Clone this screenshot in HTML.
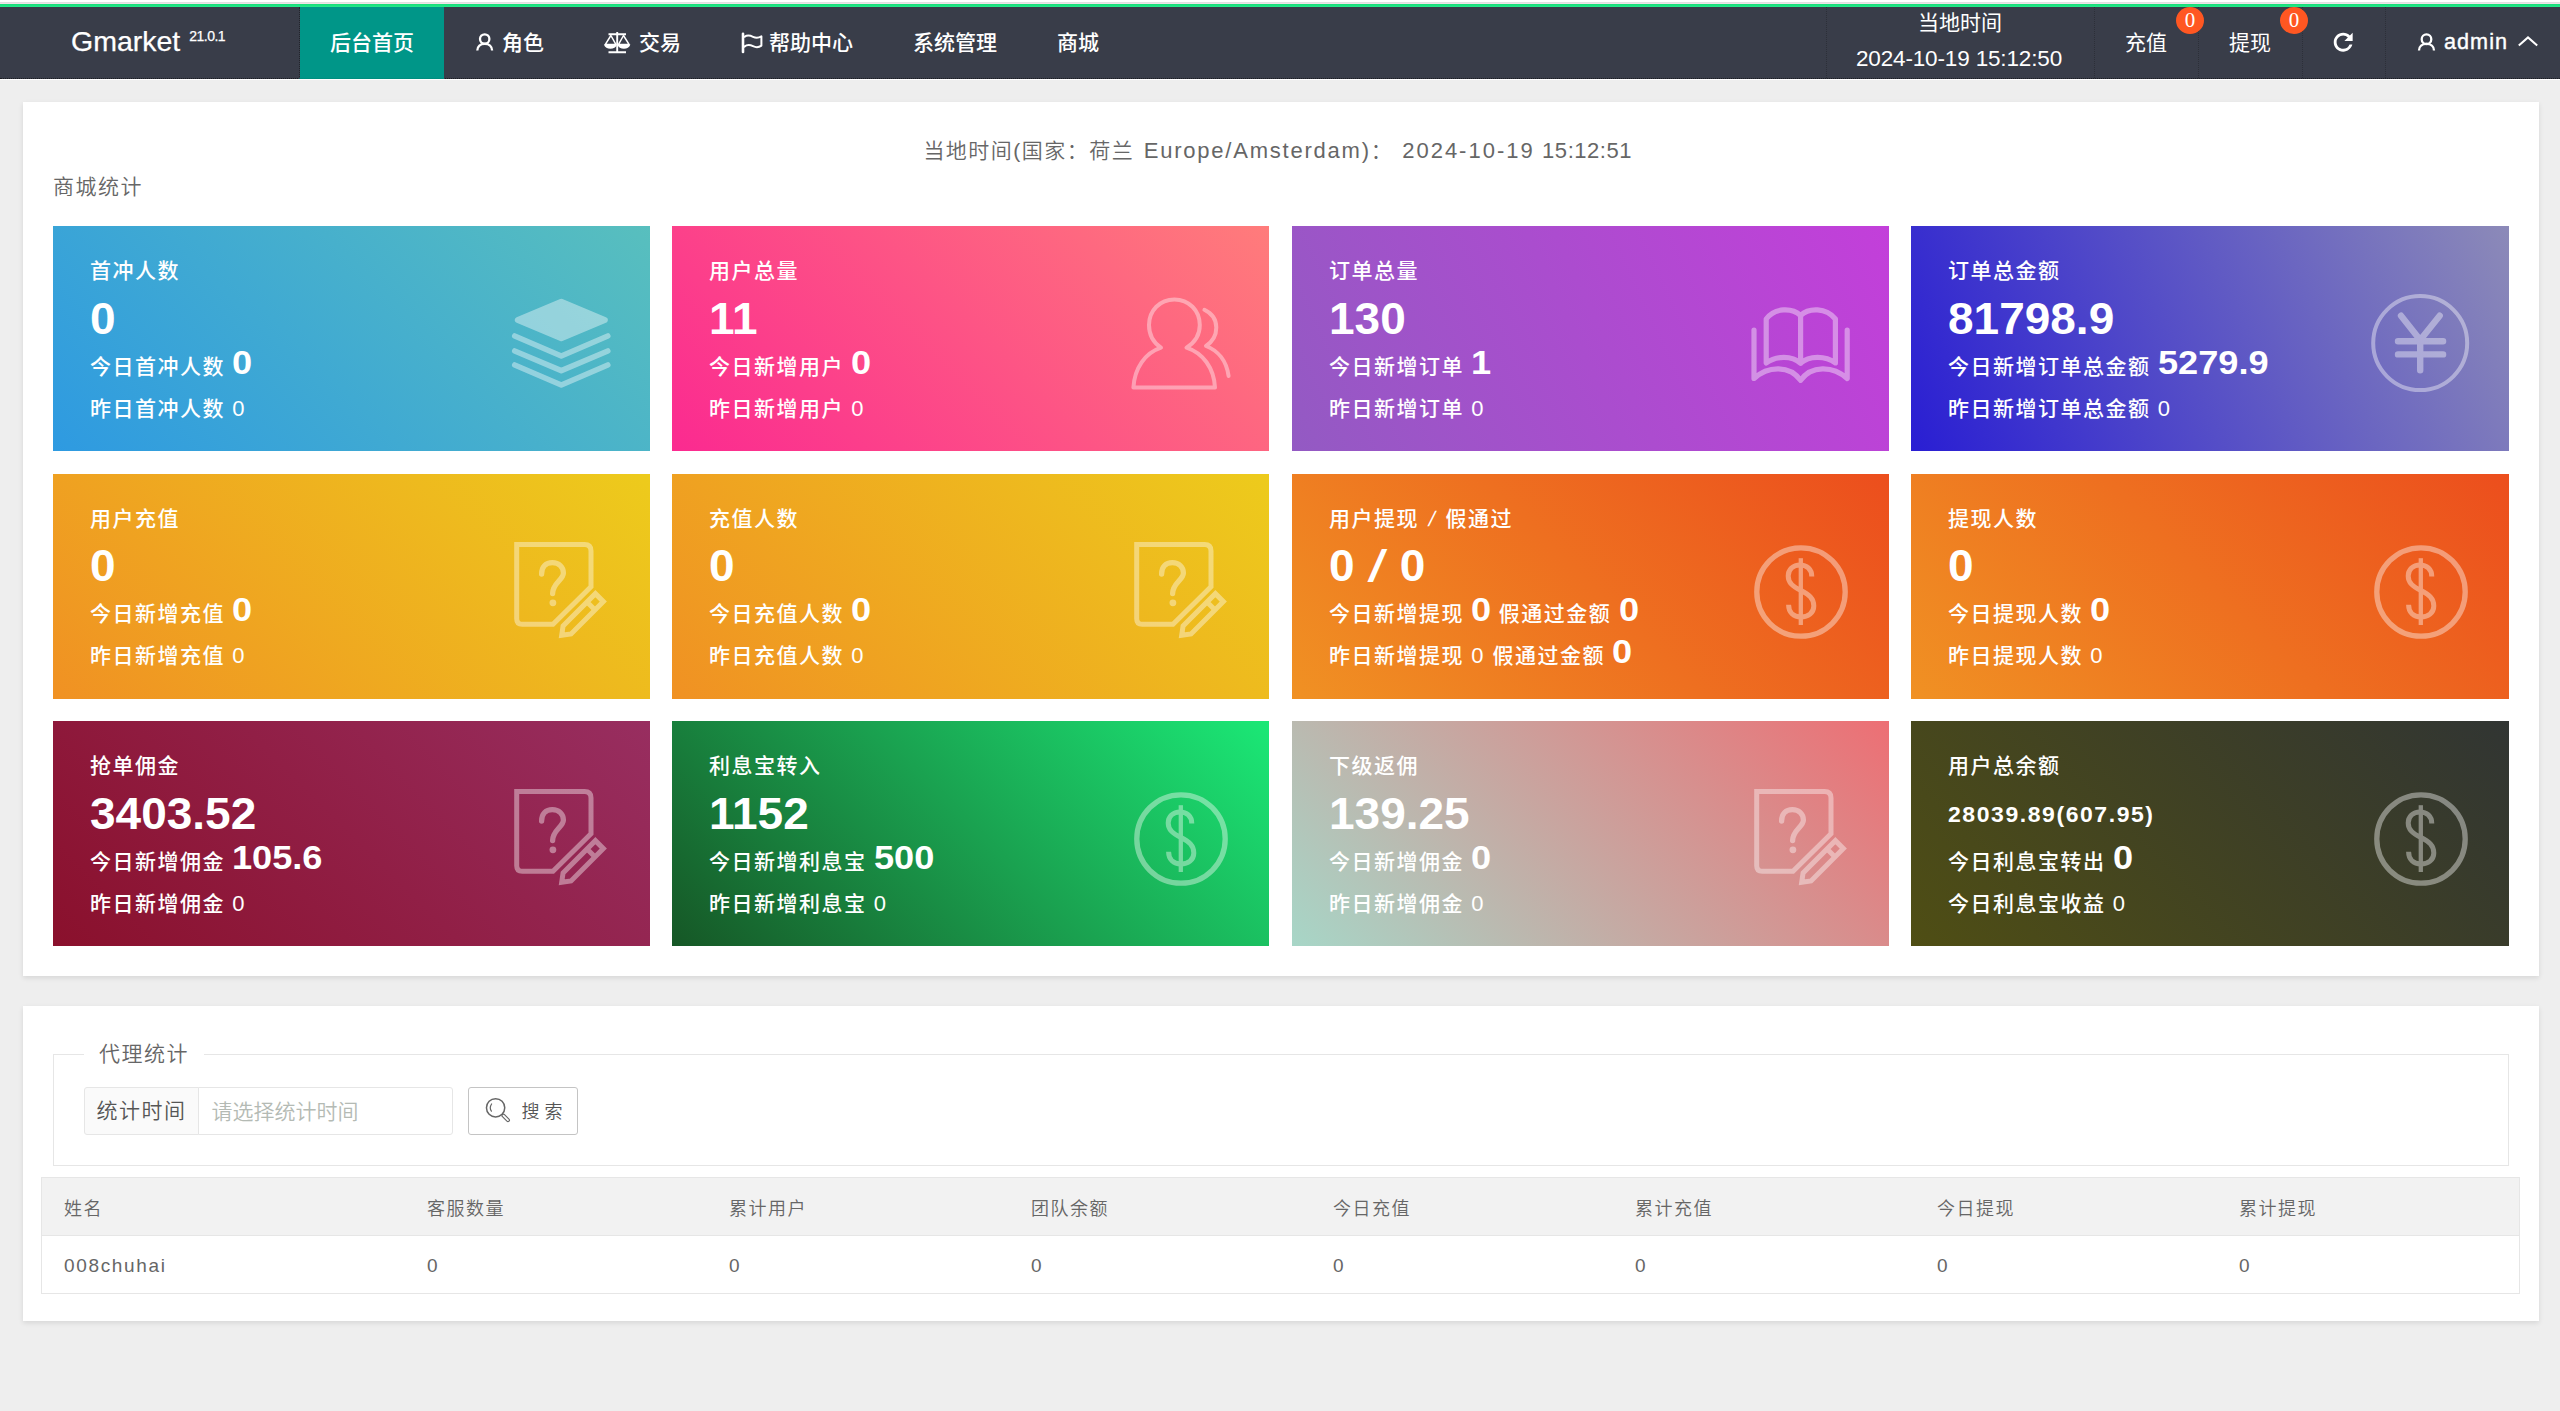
<!DOCTYPE html>
<html lang="zh-CN">
<head>
<meta charset="utf-8">
<title>Gmarket</title>
<style>
*{box-sizing:border-box;margin:0;padding:0}
html,body{width:2560px;height:1411px;overflow:hidden}
body{background:#eee;font-family:"Liberation Sans","Noto Sans CJK SC",sans-serif;color:#666;position:relative;font-weight:350}
.abs{position:absolute}
/* top strip */
#t0{left:0;top:0;width:2560px;height:2px;background:#fff}
#t1{left:0;top:2px;width:2560px;height:1px;background:#e0e0e0}
#t2{left:0;top:3px;width:2560px;height:1px;background:#efe4e8}
#t3{left:0;top:4px;width:2560px;height:3px;background:linear-gradient(#16dc78,#25e98a)}
/* header */
#hd{left:0;top:7px;width:2560px;height:72px;background:#393d49;border-bottom:1px dotted #1b1d22;color:#fff;font-weight:500}
#hdw{left:0;top:79px;width:2560px;height:1px;background:#fff}
#logo{left:71px;top:14px;font-size:28.5px;line-height:40px;color:#fff;white-space:nowrap;font-weight:400;-webkit-text-stroke:.25px #fff}
#logo sup{font-size:14px;position:relative;top:-10.5px;left:1px;vertical-align:baseline;letter-spacing:-.5px}
.nav{top:0;height:71px;line-height:71px;font-size:21px;color:#fff;white-space:nowrap}
#n0{left:299px;width:145px;height:72px;background:#009688;background-clip:padding-box;text-align:center;border-left:1px dotted #23252c;border-bottom:1px solid #008e80}
.ic{position:absolute}
.rt{top:0;height:71px;color:#fff;white-space:nowrap;font-size:21px;font-weight:400}
.vd{top:0;width:1px;height:71px;border-left:1px dotted #2c2f38}
.badge{width:28.4px;height:27.2px;border-radius:50%;background:#ff5722;color:#fff;font-family:"Liberation Serif",serif;font-weight:400;font-size:21px;line-height:26.5px;text-align:center}
/* cards */
.card{background:#fff;box-shadow:0 2px 5px rgba(0,0,0,.10)}
#c1{left:23px;top:102px;width:2516px;height:874px}
#c2{left:23px;top:1006px;width:2516px;height:315px}
#tline{padding-right:4.5px;left:0;top:134px;width:2560px;text-align:center;font-size:21px;line-height:34px;letter-spacing:1.5px;color:#666;white-space:pre}
#ttl{left:53px;top:171px;font-size:21px;line-height:32px;color:#666;letter-spacing:1.5px}
.st{width:597px;height:225px;color:#fff;overflow:hidden;font-weight:500}
.st div{position:absolute;left:37px;white-space:nowrap;letter-spacing:1.5px}
.st .a{top:28px;font-size:21px;line-height:34px}
.st .b{top:66.5px;font-size:44px;line-height:52px;font-weight:bold;letter-spacing:0;transform:scaleX(1.045);transform-origin:0 0}
.st .c{top:118.7px;font-size:21px;line-height:44px}
.st .d{top:165.5px;font-size:21px;line-height:34px}
.st b{font-size:34px;font-weight:bold;letter-spacing:0;line-height:0;display:inline-block;transform:scaleX(1.063);transform-origin:0 0;margin-right:1.2px}
.st .ico{position:absolute;opacity:.4}
#tline .l{font-size:22px}
.st .n{font-size:22px}
.st .sm{font-size:22px;letter-spacing:1.5px}
.r2 .c,.r2 .d{margin-top:-1px}
.r2 .b{margin-top:-.7px}
.st i{font-style:normal;display:inline-block;transform:skewX(-13deg)}
.st .s1{margin:0 2.1px 0 2.4px}
.st .s2{margin:0 3.5px 0 3px}

#fs{left:53px;top:1054px;width:2456px;height:112px;border:1px solid #e6e6e6}
#lg{left:84px;top:1038px;width:120px;height:32px;background:#fff;padding-left:15px;font-size:21px;line-height:32px;letter-spacing:1.5px;color:#666;white-space:nowrap}
#lb{left:84px;top:1087px;width:115px;height:48px;border:1px solid #e6e6e6;border-radius:3px 0 0 3px;background:#fafafa;font-size:21px;line-height:46px;letter-spacing:1.5px;color:#555;padding-left:11.5px;white-space:nowrap}
#inp{left:198px;top:1087px;width:255px;height:48px;border:1px solid #e6e6e6;border-radius:0 3px 3px 0;background:#fff;font-size:21px;line-height:48px;color:#b4bab4;padding-left:12.5px;white-space:nowrap}
#btn{left:468px;top:1087px;width:110px;height:48px;border:1px solid #c4c4c4;border-radius:3px;background:#fff;font-size:18px;line-height:46px;color:#555;white-space:nowrap}
#btn span{position:absolute;left:52.5px;top:1.3px}
#tb{left:41px;top:1177px;width:2479px;height:117px;border:1px solid #e6e6e6;background:#fff;font-size:18px;letter-spacing:1.5px;color:#666}
#th{left:0;top:0;width:2477px;height:57px;background:#f2f2f2}
.hl{left:0;width:2477px;height:1px;background:#e6e6e6}
#tb .h{top:1.5px;line-height:58px;white-space:nowrap}
#tb .r{top:59px;line-height:58px;white-space:nowrap;font-size:19px;letter-spacing:1.65px}
</style>
</head>
<body>
<div class="abs" id="t0"></div><div class="abs" id="t1"></div><div class="abs" id="t2"></div><div class="abs" id="t3"></div>
<div class="abs" id="hd">
  <div class="abs" id="logo">Gmarket <sup>21.0.1</sup></div>
  <div class="abs nav" id="n0">后台首页</div>
  <div class="abs nav" style="left:502px">角色</div>
  <div class="abs nav" style="left:639px">交易</div>
  <div class="abs nav" style="left:769px">帮助中心</div>
  <div class="abs nav" style="left:913px">系统管理</div>
  <div class="abs nav" style="left:1057px">商城</div>
  <svg class="abs" style="left:470px;top:24px" width="30" height="30" viewBox="0 0 30 30" fill="none" stroke="#fff" stroke-width="2.3"><circle cx="14.7" cy="8" r="4.7"/><path d="M7.3 19.6 C7.3 15.2, 10.4 12.8, 14.7 12.8 C19 12.8, 22.1 15.2, 22.1 19.6"/></svg>
  <svg class="abs" style="left:600px;top:24px" width="36" height="30" viewBox="0 0 36 30" fill="none" stroke="#fff" stroke-width="1.7"><path d="M8.5 3.2 L26 3.2 M17.2 1 L17.2 20.5 M8.5 21.3 L26 21.3" stroke-width="1.9"/><path d="M10.9 4.5 L5.2 13.6 L16 13.6 Z M23.5 4.5 L18.4 13.6 L29.2 13.6 Z" stroke-width="1.5" stroke-linejoin="round"/><path d="M3.9 13.6 L17 13.6 C16 16.6, 13.5 17.8, 10.4 17.8 C7.3 17.8, 5 16.6, 3.9 13.6 Z M17.4 13.6 L30.4 13.6 C29.3 16.6, 27 17.8, 23.9 17.8 C20.8 17.8, 18.4 16.6, 17.4 13.6 Z" fill="#fff" stroke="none"/></svg>
  <svg class="abs" style="left:736px;top:24px" width="36" height="30" viewBox="0 0 36 30" fill="none" stroke="#fff" stroke-width="2" stroke-linecap="round" stroke-linejoin="round"><path d="M7 2.8 L7 21" stroke-width="2.6"/><path d="M8.4 5.8 C11.5 3.8, 14.5 4.6, 17 5.8 C19.5 7, 22.5 7.2, 25.4 5.2 L25.4 14.6 C22.5 16.8, 19.5 16.4, 17 15.2 C14.5 14, 11.5 13.2, 8.4 15.6"/></svg>
  <svg class="abs" style="left:2329.3px;top:21.3px" width="28.4" height="28.4" viewBox="0 0 24 24"><path fill="#fff" d="M17.65 6.35C16.2 4.9 14.21 4 12 4c-4.42 0-7.99 3.58-7.99 8s3.57 8 7.99 8c3.73 0 6.84-2.55 7.73-6h-2.38c-.82 2.33-2.74 3.6-5.35 3.6-3.1 0-5.6-2.5-5.6-5.6s2.5-5.6 5.6-5.6c1.55 0 2.94.64 3.95 1.65L13 11h7V4l-2.35 2.35z"/></svg>
  <svg class="abs" style="left:2412px;top:24px" width="30" height="30" viewBox="0 0 30 30" fill="none" stroke="#fff" stroke-width="2.3"><circle cx="14.5" cy="8.2" r="4.8"/><path d="M7 19.6 C7 15.2, 10.2 12.9, 14.5 12.9 C18.8 12.9, 22 15.2, 22 19.6"/></svg>
  <svg class="abs" style="left:2514px;top:26px" width="30" height="20" viewBox="0 0 30 20" fill="none" stroke="#fff" stroke-width="2"><path d="M4.8 12.6 L14 4.4 L23.2 12.6"/></svg>

  <div class="abs vd" style="left:1826px"></div>
  <div class="abs vd" style="left:2094px"></div>
  <div class="abs vd" style="left:2198px"></div>
  <div class="abs vd" style="left:2302px"></div>
  <div class="abs vd" style="left:2385px"></div>
  <div class="abs rt" style="left:1826px;width:268px;text-align:center;top:0;line-height:35px;padding-top:-2px"><div style="height:35px;line-height:32px">当地时间</div><div style="font-size:22.5px;line-height:33px;letter-spacing:-.15px;position:relative;left:-1px">2024-10-19 15:12:50</div></div>
  <div class="abs rt" style="left:2125px;line-height:71px">充值</div>
  <div class="abs badge" style="left:2175.8px;top:0">0</div>
  <div class="abs rt" style="left:2229px;line-height:71px">提现</div>
  <div class="abs badge" style="left:2279.8px;top:0">0</div>
  <div class="abs rt" style="left:2444px;top:-.9px;line-height:71px;font-size:21.6px;letter-spacing:1.05px;-webkit-text-stroke:.4px #fff">admin</div>
</div>
<div class="abs" id="hdw"></div>

<div class="abs card" id="c1"></div>
<div class="abs" id="tline">当地时间(国家：荷兰 <span class="l" style="letter-spacing:1.78px;margin-left:2px">Europe/Amsterdam)</span>： <span class="l" style="letter-spacing:2px;margin-left:1.5px">2024-10-19</span> <span class="l" style="letter-spacing:.55px">15:12:51</span></div>
<div class="abs" id="ttl">商城统计</div>

<div class="abs st" style="left:53px;top:226px;width:597px;background:linear-gradient(45deg,#2e9ae1,#58bfbe)">
<div class="a">首冲人数</div><div class="b">0</div><div class="c">今日首冲人数 <b>0</b></div><div class="d">昨日首冲人数 <span class="n">0</span></div>
<svg class="ico" style="left:457px;top:60px" width="120" height="110" viewBox="0 0 120 110" fill="none" stroke="#fff" stroke-linecap="round" stroke-linejoin="round">
<path d="M51.3 15.8 L94.8 34 L51.3 52.2 L7.8 34 Z" fill="#fff" stroke-width="6"/>
<path d="M4.7 50 L51.3 70 L97.8 50" stroke-width="5.6"/>
<path d="M4.7 65 L51.3 84.6 L97.8 65" stroke-width="5.6"/>
<path d="M4.7 79 L51.3 99 L97.8 79" stroke-width="5.6"/>
</svg>
</div>
<div class="abs st" style="left:672px;top:226px;width:597px;background:linear-gradient(45deg,#fb2a90,#ff7c7b)">
<div class="a">用户总量</div><div class="b">11</div><div class="c">今日新增用户 <b>0</b></div><div class="d">昨日新增用户 <span class="n">0</span></div>
<svg class="ico" style="left:438px;top:54px" width="130" height="120" viewBox="0 0 130 120" fill="none" stroke="#fff" stroke-width="4" stroke-linecap="round" stroke-linejoin="round">
<path d="M51 67.6 C44 63, 39 55, 39 45 C39 30.5, 50 19.4, 64.4 19.4 C78.8 19.4, 89.8 30.5, 89.8 45 C89.8 55, 84 63, 76.5 67.6 C93 73, 104 88, 105 107.6 L23.4 107.6 C24.5 88, 35 73, 51 67.6 Z"/>
<path d="M94.4 29.8 C102 33.5, 106.3 40, 106.3 47.5 C106.3 55.5, 102 62, 96 66 C108 70.5, 116.5 81, 118.6 96"/>
</svg>
</div>
<div class="abs st" style="left:1292px;top:226px;width:597px;background:linear-gradient(65deg,#935ac3,#c33fda)">
<div class="a">订单总量</div><div class="b">130</div><div class="c">今日新增订单 <b>1</b></div><div class="d">昨日新增订单 <span class="n">0</span></div>
<svg class="ico" style="left:438px;top:54px" width="140" height="120" viewBox="0 0 140 120" fill="none" stroke="#fff" stroke-width="5.2" stroke-linecap="round" stroke-linejoin="round">
<path d="M24 50.2 L24 98.5 C38 85.5, 60 85, 70.6 100.4 C81 85, 103 85.5, 117.2 98.5 L117.2 50.2"/>
<path d="M70.6 35.5 L70.6 83.2 C62 75.5, 46 75.5, 36.2 83 L36.2 39 C45 27.5, 62 27.5, 70.6 35.5 C79 27.5, 96 27.5, 105.4 39 L105.4 83 C95.5 75.5, 79 75.5, 70.6 83.2"/>
</svg>
</div>
<div class="abs st" style="left:1911px;top:226px;width:598px;background:linear-gradient(65deg,#291ed3,#8c8ab8)">
<div class="a">订单总金额</div><div class="b">81798.9</div><div class="c">今日新增订单总金额 <b>5279.9</b></div><div class="d">昨日新增订单总金额 <span class="n">0</span></div>
<svg class="ico" style="left:439px;top:54px" width="140" height="120" viewBox="0 0 140 120" fill="none" stroke="#fff" stroke-linecap="round" stroke-linejoin="round">
<circle cx="70.2" cy="63.1" r="47" stroke-width="4"/>
<path d="M51 35.7 L70.2 60 L89.7 35.7 M70.2 60 L70.2 90.2 M48 61.2 L93.1 61.2 M48 74.4 L93.1 74.4" stroke-width="6.4"/>
</svg>
</div>
<div class="abs st r2" style="left:53px;top:474px;width:597px;background:linear-gradient(45deg,#f09123,#edcb1c)">
<div class="a">用户充值</div><div class="b">0</div><div class="c">今日新增充值 <b>0</b></div><div class="d">昨日新增充值 <span class="n">0</span></div>
<svg class="ico" style="left:437px;top:51px" width="140" height="120" viewBox="0 0 140 120" fill="none" stroke="#fff" stroke-width="5" stroke-linejoin="miter">
<path d="M26.7 19.6 L94.5 19.6 Q101 19.6 101 26 L101 61.7 L63 99.3 L32.3 99.3 Q26.7 99.3 26.7 93.7 Z"/>
<path d="M51.6 49 C51.6 41.5, 56 37.6, 62.3 37.6 C69 37.6, 73.4 42, 73.4 48 C73.4 55, 62.6 58, 62.6 68.6" stroke-width="5.3" stroke-linecap="round"/>
<circle cx="62.9" cy="77.8" r="3.4" fill="#fff" stroke="none"/>
<g transform="translate(68.5 113.5) rotate(-45)"><path d="M4.5 0 L12.1 -5.65 L57.8 -5.65 L57.8 5.65 L12.1 5.65 Z M46 -5.65 L46 5.65"/></g>
</svg>
</div>
<div class="abs st r2" style="left:672px;top:474px;width:597px;background:linear-gradient(45deg,#f09123,#edcb1c)">
<div class="a">充值人数</div><div class="b">0</div><div class="c">今日充值人数 <b>0</b></div><div class="d">昨日充值人数 <span class="n">0</span></div>
<svg class="ico" style="left:438px;top:51px" width="140" height="120" viewBox="0 0 140 120" fill="none" stroke="#fff" stroke-width="5" stroke-linejoin="miter">
<path d="M26.7 19.6 L94.5 19.6 Q101 19.6 101 26 L101 61.7 L63 99.3 L32.3 99.3 Q26.7 99.3 26.7 93.7 Z"/>
<path d="M51.6 49 C51.6 41.5, 56 37.6, 62.3 37.6 C69 37.6, 73.4 42, 73.4 48 C73.4 55, 62.6 58, 62.6 68.6" stroke-width="5.3" stroke-linecap="round"/>
<circle cx="62.9" cy="77.8" r="3.4" fill="#fff" stroke="none"/>
<g transform="translate(68.5 113.5) rotate(-45)"><path d="M4.5 0 L12.1 -5.65 L57.8 -5.65 L57.8 5.65 L12.1 5.65 Z M46 -5.65 L46 5.65"/></g>
</svg>
</div>
<div class="abs st r2" style="left:1292px;top:474px;width:597px;background:linear-gradient(45deg,#f09123,#ec4e1d)">
<div class="a">用户提现 <i class="s1">/</i> 假通过</div><div class="b">0 <i class="s2">/</i> 0</div><div class="c">今日新增提现 <b>0</b> 假通过金额 <b>0</b></div><div class="d">昨日新增提现 <span class="n">0</span> 假通过金额 <b>0</b></div>
<svg class="ico" style="left:438px;top:51px" width="140" height="120" viewBox="0 0 140 120" fill="none" stroke="#fff" stroke-width="5">
<circle cx="71" cy="67" r="44.2" stroke-width="5.3"/>
<path d="M70.8 33.2 L70.8 100" stroke-width="4.3"/>
<path d="M81.8 51.5 C81.8 44, 76.5 39.9, 70 39.9 C63 39.9, 58.2 44.5, 58.2 51 C58.2 58, 63 61.5, 71 65.5 C79 69.5, 83.8 73.5, 83.8 81 C83.8 88, 78 92, 71 92 C63.5 92, 58.6 87.5, 58.6 79.8"/>
</svg>
</div>
<div class="abs st r2" style="left:1911px;top:474px;width:598px;background:linear-gradient(45deg,#f09123,#ec4e1d)">
<div class="a">提现人数</div><div class="b">0</div><div class="c">今日提现人数 <b>0</b></div><div class="d">昨日提现人数 <span class="n">0</span></div>
<svg class="ico" style="left:439px;top:51px" width="140" height="120" viewBox="0 0 140 120" fill="none" stroke="#fff" stroke-width="5">
<circle cx="71" cy="67" r="44.2" stroke-width="5.3"/>
<path d="M70.8 33.2 L70.8 100" stroke-width="4.3"/>
<path d="M81.8 51.5 C81.8 44, 76.5 39.9, 70 39.9 C63 39.9, 58.2 44.5, 58.2 51 C58.2 58, 63 61.5, 71 65.5 C79 69.5, 83.8 73.5, 83.8 81 C83.8 88, 78 92, 71 92 C63.5 92, 58.6 87.5, 58.6 79.8"/>
</svg>
</div>
<div class="abs st" style="left:53px;top:721px;width:597px;background:linear-gradient(45deg,#8a102c,#982e60)">
<div class="a">抢单佣金</div><div class="b">3403.52</div><div class="c">今日新增佣金 <b>105.6</b></div><div class="d">昨日新增佣金 <span class="n">0</span></div>
<svg class="ico" style="left:437px;top:51px" width="140" height="120" viewBox="0 0 140 120" fill="none" stroke="#fff" stroke-width="5" stroke-linejoin="miter">
<path d="M26.7 19.6 L94.5 19.6 Q101 19.6 101 26 L101 61.7 L63 99.3 L32.3 99.3 Q26.7 99.3 26.7 93.7 Z"/>
<path d="M51.6 49 C51.6 41.5, 56 37.6, 62.3 37.6 C69 37.6, 73.4 42, 73.4 48 C73.4 55, 62.6 58, 62.6 68.6" stroke-width="5.3" stroke-linecap="round"/>
<circle cx="62.9" cy="77.8" r="3.4" fill="#fff" stroke="none"/>
<g transform="translate(68.5 113.5) rotate(-45)"><path d="M4.5 0 L12.1 -5.65 L57.8 -5.65 L57.8 5.65 L12.1 5.65 Z M46 -5.65 L46 5.65"/></g>
</svg>
</div>
<div class="abs st" style="left:672px;top:721px;width:597px;background:linear-gradient(45deg,#165726,#1aa04f 50%,#1be876)">
<div class="a">利息宝转入</div><div class="b">1152</div><div class="c">今日新增利息宝 <b>500</b></div><div class="d">昨日新增利息宝 <span class="n">0</span></div>
<svg class="ico" style="left:438px;top:51px" width="140" height="120" viewBox="0 0 140 120" fill="none" stroke="#fff" stroke-width="5">
<circle cx="71" cy="67" r="44.2" stroke-width="5.3"/>
<path d="M70.8 33.2 L70.8 100" stroke-width="4.3"/>
<path d="M81.8 51.5 C81.8 44, 76.5 39.9, 70 39.9 C63 39.9, 58.2 44.5, 58.2 51 C58.2 58, 63 61.5, 71 65.5 C79 69.5, 83.8 73.5, 83.8 81 C83.8 88, 78 92, 71 92 C63.5 92, 58.6 87.5, 58.6 79.8"/>
</svg>
</div>
<div class="abs st" style="left:1292px;top:721px;width:597px;background:linear-gradient(45deg,#a7d6c7,#ed6f74)">
<div class="a">下级返佣</div><div class="b">139.25</div><div class="c">今日新增佣金 <b>0</b></div><div class="d">昨日新增佣金 <span class="n">0</span></div>
<svg class="ico" style="left:438px;top:51px" width="140" height="120" viewBox="0 0 140 120" fill="none" stroke="#fff" stroke-width="5" stroke-linejoin="miter">
<path d="M26.7 19.6 L94.5 19.6 Q101 19.6 101 26 L101 61.7 L63 99.3 L32.3 99.3 Q26.7 99.3 26.7 93.7 Z"/>
<path d="M51.6 49 C51.6 41.5, 56 37.6, 62.3 37.6 C69 37.6, 73.4 42, 73.4 48 C73.4 55, 62.6 58, 62.6 68.6" stroke-width="5.3" stroke-linecap="round"/>
<circle cx="62.9" cy="77.8" r="3.4" fill="#fff" stroke="none"/>
<g transform="translate(68.5 113.5) rotate(-45)"><path d="M4.5 0 L12.1 -5.65 L57.8 -5.65 L57.8 5.65 L12.1 5.65 Z M46 -5.65 L46 5.65"/></g>
</svg>
</div>
<div class="abs st" style="left:1911px;top:721px;width:598px;background:linear-gradient(45deg,#4f4e14,#313533)">
<div class="a">用户总余额</div><div class="b" style="top:59.5px"><span class="sm">28039.89(607.95)</span></div><div class="c">今日利息宝转出 <b>0</b></div><div class="d">今日利息宝收益 <span class="n">0</span></div>
<svg class="ico" style="left:439px;top:51px" width="140" height="120" viewBox="0 0 140 120" fill="none" stroke="#fff" stroke-width="5">
<circle cx="71" cy="67" r="44.2" stroke-width="5.3"/>
<path d="M70.8 33.2 L70.8 100" stroke-width="4.3"/>
<path d="M81.8 51.5 C81.8 44, 76.5 39.9, 70 39.9 C63 39.9, 58.2 44.5, 58.2 51 C58.2 58, 63 61.5, 71 65.5 C79 69.5, 83.8 73.5, 83.8 81 C83.8 88, 78 92, 71 92 C63.5 92, 58.6 87.5, 58.6 79.8"/>
</svg>
</div>

<div class="abs card" id="c2"></div>
<div class="abs" id="fs"></div>
<div class="abs" id="lg">代理统计</div>
<div class="abs" id="lb">统计时间</div>
<div class="abs" id="inp">请选择统计时间</div>
<div class="abs" id="btn"><svg class="abs" style="left:14.1px;top:8.4px" width="30" height="30" viewBox="0 0 30 30" fill="none" stroke="#666" stroke-linecap="round"><circle cx="12.6" cy="11.8" r="9.15" stroke-width="1.5"/><g transform="translate(12.6 11.8) rotate(45)"><rect x="9.7" y="-1.45" width="9.2" height="2.9" rx="1.45" stroke-width="1.15"/></g><path d="M8.6 8 C7 10.4, 7 13.2, 8.4 15.2" stroke-width="1.2"/></svg><span>搜 索</span></div>
<div class="abs" id="tb">
  <div class="abs" id="th"></div>
  <div class="abs hl" style="top:57px"></div>
  <span class="abs h" style="left:22px">姓名</span><span class="abs h" style="left:385px">客服数量</span><span class="abs h" style="left:687px">累计用户</span><span class="abs h" style="left:989px">团队余额</span><span class="abs h" style="left:1291px">今日充值</span><span class="abs h" style="left:1593px">累计充值</span><span class="abs h" style="left:1895px">今日提现</span><span class="abs h" style="left:2197px">累计提现</span>
  <span class="abs r" style="left:22px">008chuhai</span><span class="abs r" style="left:385px">0</span><span class="abs r" style="left:687px">0</span><span class="abs r" style="left:989px">0</span><span class="abs r" style="left:1291px">0</span><span class="abs r" style="left:1593px">0</span><span class="abs r" style="left:1895px">0</span><span class="abs r" style="left:2197px">0</span>
</div>

</body>
</html>
